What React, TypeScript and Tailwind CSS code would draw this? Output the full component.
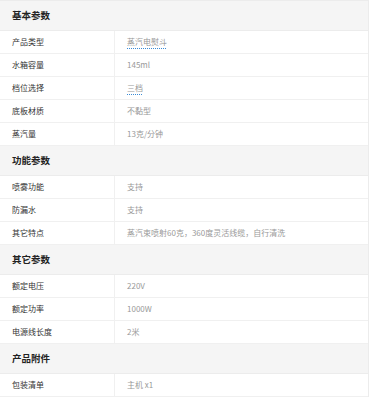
const sections: { title: string; rows: { label: string; value: string; tip?: boolean }[] }[] = [
  {
    title: '基本参数',
    rows: [
      { label: '产品类型', value: '蒸汽电熨斗', tip: true },
      { label: '水箱容量', value: '145ml' },
      { label: '档位选择', value: '三档', tip: true },
      { label: '底板材质', value: '不黏型' },
      { label: '蒸汽量', value: '13克/分钟' },
    ],
  },
  {
    title: '功能参数',
    rows: [
      { label: '喷雾功能', value: '支持' },
      { label: '防漏水', value: '支持' },
      { label: '其它特点', value: '蒸汽束喷射60克，360度灵活线缆，自行清洗' },
    ],
  },
  {
    title: '其它参数',
    rows: [
      { label: '额定电压', value: '220V' },
      { label: '额定功率', value: '1000W' },
      { label: '电源线长度', value: '2米' },
    ],
  },
  {
    title: '产品附件',
    rows: [{ label: '包装清单', value: '主机 x1' }],
  },
]

export default function App() {
  return (
    <div
      className="w-[369px] h-[400px] overflow-hidden bg-white"
      style={{ fontFamily: '"Noto Sans CJK SC", "Noto Sans", sans-serif' }}
    >
      <div className="border-t border-r border-[#ececec]">
        {sections.map((s) => (
          <div key={s.title}>
            {/* section header */}
            <div className="h-[30px] flex items-center px-3 bg-[#f5f5f5] border-b border-[#ececec] text-[9.5px] font-bold text-[#222]">
              {s.title}
            </div>
            {s.rows.map((r) => (
              <div key={r.label} className="grid grid-cols-[115px_1fr] h-[23px] border-b border-[#f0f0f0] text-[8px]">
                <div className="flex items-center pl-3 text-[#333] border-r border-[#f0f0f0]">{r.label}</div>
                <div className="flex items-center pl-3 text-[#999]">
                  {r.tip ? (
                    <span className="underline decoration-dotted decoration-[#3a8bd6] underline-offset-[3px]">{r.value}</span>
                  ) : (
                    r.value
                  )}
                </div>
              </div>
            ))}
          </div>
        ))}
      </div>
    </div>
  )
}
